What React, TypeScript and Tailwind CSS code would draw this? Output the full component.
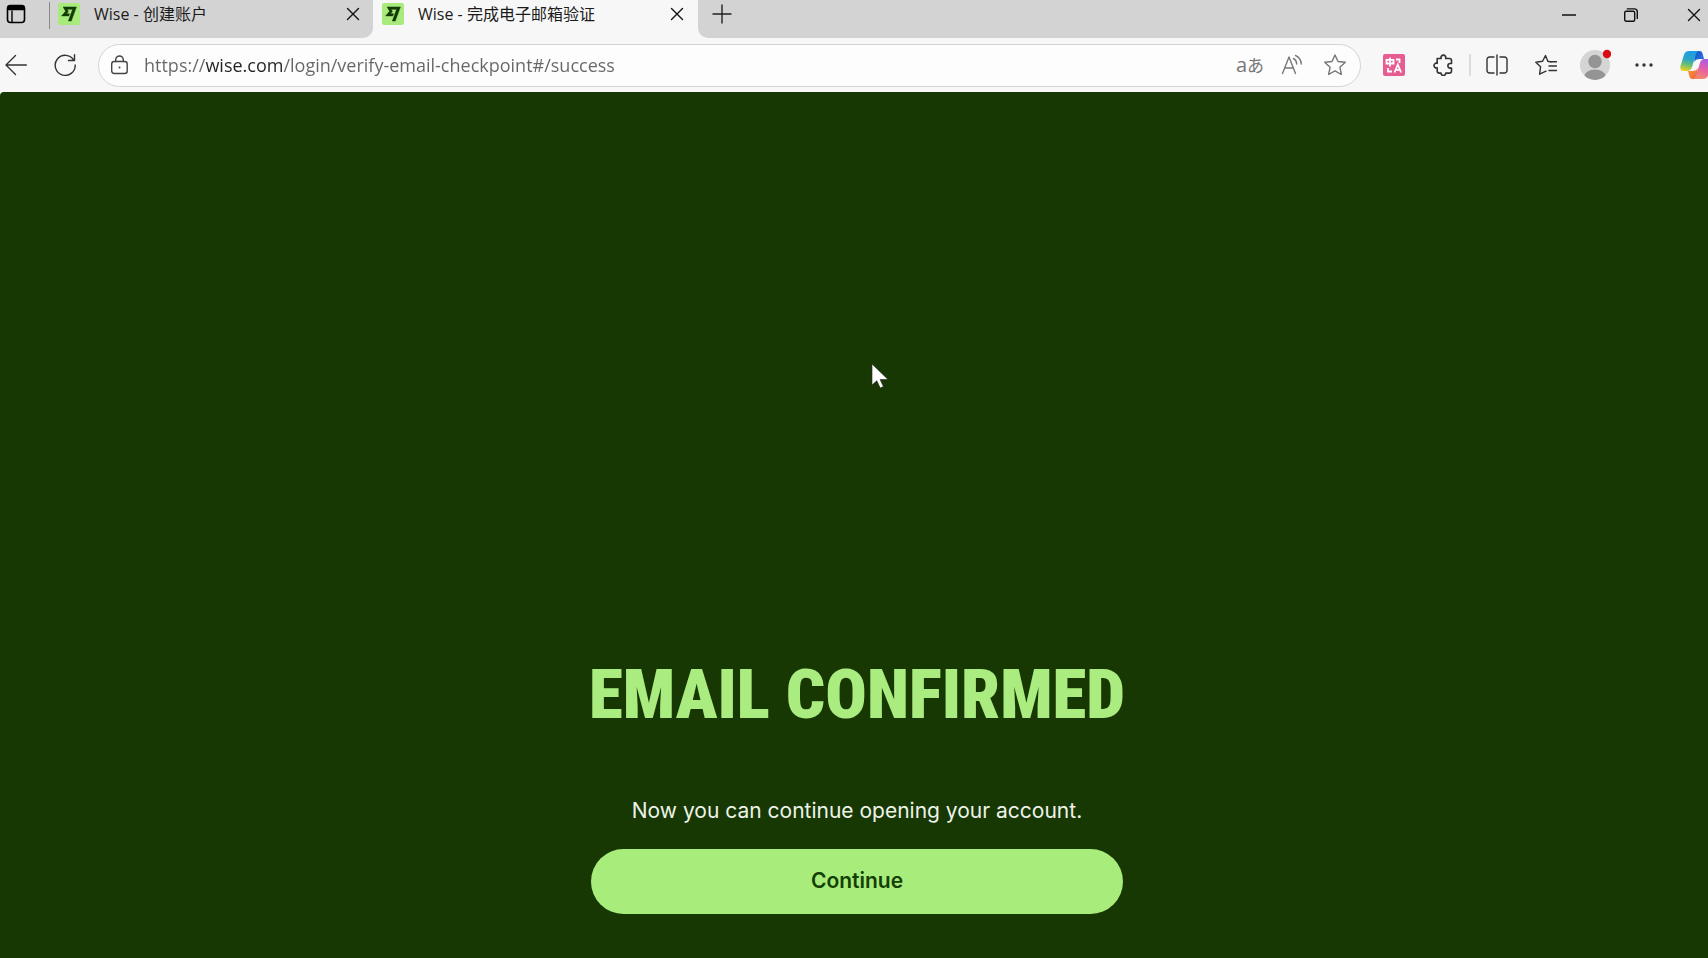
import React from "react";

const tabs = [
  { id: "create", title: "Wise - 创建账户", active: false },
  { id: "verify", title: "Wise - 完成电子邮箱验证", active: true },
];

const WiseIcon = () => (
  <span className="flex h-[22px] w-[22px] shrink-0 items-center justify-center rounded-xs bg-[#a8ea7c]">
    <svg
      viewBox="-1 -1 26 26"
      className="h-4 w-4"
      fill="#143a04"
      stroke="#143a04"
      strokeWidth="0.8"
      aria-hidden="true"
    >
      <path d="M6.488 7.469 0 15.05h11.585l1.301-3.576H7.922l3.033-3.507.01-.092L8.993 4.48h8.873l-6.878 18.925h4.706L24 .595H2.543l3.945 6.874Z" />
    </svg>
  </span>
);

type IconProps = {
  size: number;
  children: React.ReactNode;
  className?: string;
};

// stroke icon on a grid of its own pixel size
const Icon = ({ size, children, className = "" }: IconProps) => (
  <svg
    width={size}
    height={size}
    viewBox={`0 0 ${size} ${size}`}
    fill="none"
    stroke="currentColor"
    strokeWidth="1.4"
    strokeLinecap="round"
    strokeLinejoin="round"
    className={`shrink-0 ${className}`}
    aria-hidden="true"
  >
    {children}
  </svg>
);

const CloseIcon = () => (
  <Icon size={14}>
    <path d="M1.5 1.5l11 11M12.5 1.5l-11 11" />
  </Icon>
);

const CopilotIcon = () => (
  <svg width="32" height="28" viewBox="0 0 32 28" className="shrink-0" aria-hidden="true">
    <defs>
      <linearGradient id="cpLeft" x1="0.5" y1="0" x2="0.3" y2="1">
        <stop offset="0" stopColor="#1e9be8" />
        <stop offset="0.4" stopColor="#2aa5c8" />
        <stop offset="0.7" stopColor="#6cc070" />
        <stop offset="1" stopColor="#f3cf1f" />
      </linearGradient>
      <linearGradient id="cpRight" x1="0.7" y1="0" x2="0.4" y2="1">
        <stop offset="0" stopColor="#a65be8" />
        <stop offset="0.5" stopColor="#e35fa8" />
        <stop offset="1" stopColor="#f98a6a" />
      </linearGradient>
      <linearGradient id="cpTop" x1="0" y1="0" x2="1" y2="1">
        <stop offset="0" stopColor="#1550c4" />
        <stop offset="1" stopColor="#2a7be6" />
      </linearGradient>
      <linearGradient id="cpBottom" x1="0" y1="0" x2="1" y2="1">
        <stop offset="0" stopColor="#f7a13a" />
        <stop offset="1" stopColor="#ee5a45" />
      </linearGradient>
    </defs>
    <path d="M14 0h5.500c2 0 2.700 1.200 3.200 3L24 8h-4c-3 0-4.500.6-5.500 3z" fill="url(#cpTop)" />
    <path d="M18 28h-5.500c-2 0-2.700-1.200-3.200-3L8 20h4c3 0 4.500-.6 5.500-3z" fill="url(#cpBottom)" />
    <path d="M9 0h10c-1.800.6-2.700 2-3.400 4.300L12.200 15.500C11.400 18.300 10 20 7.300 20H3.500C.8 20-.2 17.800.5 15L4 3.800C4.800 1.300 6.300 0 9 0z" fill="url(#cpLeft)" />
    <path d="M23 28H13c1.800-.6 2.700-2 3.400-4.300l3.400-11.200C20.600 9.700 22 8 24.700 8h3.800c2.700 0 3.700 2.200 3 5L28 24.200c-.8 2.500-2.300 3.800-5 3.800z" fill="url(#cpRight)" />
  </svg>
);

const TabStrip = () => (
  <div className="flex h-[38px] bg-[#f7f7f7]">
    <div className="flex bg-[#d3d3d3]">
      <button type="button" aria-label="Tab actions" className="flex h-[27px] w-[49px] items-center pl-1.5 text-black">
        <Icon size={20}>
          <rect x="1.500" y="1.500" width="17" height="17" rx="3" strokeWidth="1.600" />
          <path d="M2 2.500h16v3H2z" fill="currentColor" />
          <path d="M6 7v11" />
        </Icon>
      </button>
      <span className="mt-0.5 h-[27px] w-px bg-[#8a8a8a]" />
    </div>
    {tabs.map((tab) => (
      <div
        key={tab.id}
        className={`flex items-start pt-[3px] ${
          tab.active
            ? "w-[325px] bg-[#f7f7f7] pl-[9px]"
            : "w-[323px] rounded-br-[10px] bg-[#d3d3d3] pl-2"
        }`}
      >
        <button type="button" className="flex min-w-0 flex-1 items-center gap-3.5 text-left">
          <WiseIcon />
          <span className="truncate text-[16px] leading-[22px] text-[#1b1b1b]">{tab.title}</span>
        </button>
        <button
          type="button"
          aria-label="Close tab"
          className={`flex h-[22px] w-7 items-center justify-center text-[#111] ${
            tab.active ? "mr-[7px]" : "mr-1.5"
          }`}
        >
          <CloseIcon />
        </button>
      </div>
    ))}
    <div className="flex flex-1 items-start justify-between rounded-bl-[10px] bg-[#d3d3d3]">
      <button type="button" aria-label="New tab" className="flex h-[27px] w-12 items-center justify-center text-[#222]">
        <Icon size={20}>
          <path d="M10 1v18M1 10h18" />
        </Icon>
      </button>
      <div className="flex h-[30px] text-[#111]">
        <button type="button" aria-label="Minimize" className="flex w-[62px] items-center justify-center">
          <Icon size={14}>
            <path d="M0 7h14" />
          </Icon>
        </button>
        <button type="button" aria-label="Restore" className="flex w-[62px] items-center justify-center">
          <Icon size={14}>
            <rect x="0.700" y="3.200" width="10" height="10" rx="1.500" />
            <path d="M3.300 0.900h7a3 3 0 0 1 3 3v6.500" />
          </Icon>
        </button>
        <button type="button" aria-label="Close" className="flex w-[46px] items-center pl-[25px]">
          <CloseIcon />
        </button>
      </div>
    </div>
  </div>
);

const AddressBar = () => (
  <form
    className="ml-2.5 flex h-[43px] min-w-0 flex-1 items-center rounded-full border border-[#d4d4d4] bg-[#fdfdfd] pl-[11px]"
    onSubmit={(e) => e.preventDefault()}
  >
    <Icon size={20} className="text-[#444]">
      <rect x="1.700" y="6.500" width="15.500" height="12" rx="2.500" />
      <path d="M5.700 6.500V4.800a3.800 3.800 0 0 1 7.600 0v1.700" />
      <circle cx="9.500" cy="12.500" r="1" fill="currentColor" stroke="none" />
    </Icon>
    <input
      type="text"
      aria-label="Address"
      spellCheck={false}
      defaultValue="https://wise.com/login/verify-email-checkpoint#/success"
      className="ml-3.5 min-w-0 flex-1 bg-[linear-gradient(90deg,#666_61px,#222_61px,#222_138px,#666_138px)] bg-clip-text text-[18px] leading-6 text-transparent outline-none"
    />
    <div className="flex items-center pr-1 text-[#777]">
      <button type="button" aria-label="Translate" className="w-10 text-center text-[17px] leading-6">
        <span className="text-[20px]">a</span>あ
      </button>
      <button type="button" aria-label="Read aloud" className="flex w-11 justify-center">
        <Icon size={22}>
          <path d="M1.500 19.500L8 3l6.500 16.500M3.800 14h8.400M12.500 4.500c2 1 3 3 3.200 5.500M14.500 1.500c3.500 1.500 5.500 4.500 5.800 8.500" />
        </Icon>
      </button>
      <button type="button" aria-label="Add to favorites" className="flex w-[42px] justify-center">
        <Icon size={24}>
          <path d="M12 2l3 6.500 7.300.8-5.400 4.900 1.500 7.300L12 17.900l-6.400 3.600 1.500-7.300-5.400-4.900 7.300-.8z" />
        </Icon>
      </button>
    </div>
  </form>
);

const toolButton = "flex h-10 w-12 shrink-0 items-center justify-center";

const Toolbar = () => (
  <div className="flex h-[54px] items-center bg-[#f7f7f7] text-[#333]">
    <button type="button" aria-label="Back" className="flex w-8 justify-center">
      <Icon size={22}>
        <path d="M21.300 11H1M10.500 1.500L1 11l9.500 9.500" />
      </Icon>
    </button>
    <button type="button" aria-label="Refresh" className="ml-2 flex w-12 justify-center pl-0.5">
      <Icon size={22}>
        <path d="M19.800 6.200A10 10 0 1 0 21.200 11M20.500 0.800v5.700H14.500" />
      </Icon>
    </button>
    <AddressBar />
    <div className="ml-[9px] flex items-center gap-px">
      <button type="button" aria-label="Translator extension" className={toolButton}>
        <span className="flex h-[22px] w-[22px] items-center justify-center rounded-xs bg-[#e75d93] text-white">
          <svg width="20" height="20" viewBox="0 0 20 20" fill="none" stroke="currentColor" strokeWidth="1.800" aria-hidden="true">
            <path d="M2.500 4.800h7v3.700h-7zM6 2.500v9M12 4.500h3.500V8M4 13v3.500h4M10.500 17.500l3.300-8 3.300 8M11.500 14.800h4.600" />
          </svg>
        </span>
      </button>
      <button type="button" aria-label="Extensions" className={toolButton}>
        <Icon size={22}>
          <path
            d="M5.200 4.500h4a2.400 2.400 0 1 1 4.400 0h3.900a2 2 0 0 1 2 2v3h-1.300a2.300 2.300 0 0 0 0 4.600h1.300v3a2 2 0 0 1-2 2h-3.700a2.400 2.400 0 0 1-4.800 0H7.200a2 2 0 0 1-2-2v-3.300a2.400 2.400 0 1 1 0-4.500z"
            strokeWidth="1.600"
          />
        </Icon>
      </button>
      <span className="mx-px h-[22px] w-0.5 bg-[#dcdcdc]" />
      <button type="button" aria-label="Split screen" className={toolButton}>
        <Icon size={22}>
          <path d="M8 3H3.500a2.500 2.500 0 0 0-2.500 2.500v11A2.500 2.500 0 0 0 3.500 19H8M14 3h4.500A2.500 2.500 0 0 1 21 5.500v11a2.500 2.500 0 0 1-2.500 2.500H14M11 1v20" />
        </Icon>
      </button>
      <button type="button" aria-label="Favorites" className={toolButton}>
        <Icon size={22}>
          <path d="M16 8l-3.200-.8L10.500 1.500 7.600 7.200.8 8.200l4.800 4.500-1 7.500 6.400-3M14 12h7.500M15 7.800h6.500M14 16.500h7.500" />
        </Icon>
      </button>
      <button type="button" aria-label="Profile" className={toolButton}>
        <svg width="32" height="32" viewBox="0 0 32 32" aria-hidden="true">
          <clipPath id="avatar">
            <circle cx="16" cy="16" r="15" />
          </clipPath>
          <g clipPath="url(#avatar)">
            <rect width="32" height="32" fill="#d5d5d5" />
            <circle cx="16" cy="12.500" r="6.700" fill="#949494" />
            <ellipse cx="16" cy="28" rx="11" ry="7.500" fill="#949494" />
          </g>
          <circle cx="28" cy="5" r="4.200" fill="#dc0a12" />
        </svg>
      </button>
      <button type="button" aria-label="Settings and more" className={toolButton}>
        <svg width="20" height="6" viewBox="0 0 20 6" fill="currentColor" aria-hidden="true">
          <circle cx="3" cy="3" r="1.700" />
          <circle cx="10" cy="3" r="1.700" />
          <circle cx="17" cy="3" r="1.700" />
        </svg>
      </button>
      <button type="button" aria-label="Copilot" className="flex h-10 w-[39px] shrink-0 items-center overflow-hidden pl-[11px]">
        <CopilotIcon />
      </button>
    </div>
  </div>
);

const Pointer = () => (
  <svg
    width="18"
    height="26"
    viewBox="0 0 18 26"
    className="pointer-events-none absolute left-[51%] top-[271px]"
    aria-hidden="true"
  >
    <path
      d="M1 1v21l4.800-4.300 3.400 7.300 3.200-1.500-3.300-7H17z"
      fill="#fff"
      stroke="#222"
      strokeWidth="0.600"
    />
  </svg>
);

const App = () => {
  return (
    <div className="flex min-h-screen flex-col bg-[#f7f7f7] font-['Open_Sans','Noto_Sans_CJK_SC',sans-serif]">
      <header>
        <TabStrip />
        <Toolbar />
      </header>
      <main className="relative flex flex-1 flex-col items-center justify-end rounded-tl bg-[#173803] pb-11 pl-1.5 font-['Inter',sans-serif]">
        <Pointer />
        <h1 className="whitespace-nowrap font-['Roboto_Condensed','Roboto',sans-serif] text-[69px] font-black leading-[72px] text-[#aaec80]">
          EMAIL CONFIRMED
        </h1>
        <p className="mt-16 text-[21px] leading-8 text-[#eef3ea]">
          Now you can continue opening your account.
        </p>
        <button
          type="button"
          className="mt-[22px] h-[65px] w-full max-w-[532px] rounded-full bg-[#a8ed7c] pb-px text-[21px] font-semibold leading-8 text-[#143f05]"
        >
          Continue
        </button>
      </main>
    </div>
  );
};

export default App;
